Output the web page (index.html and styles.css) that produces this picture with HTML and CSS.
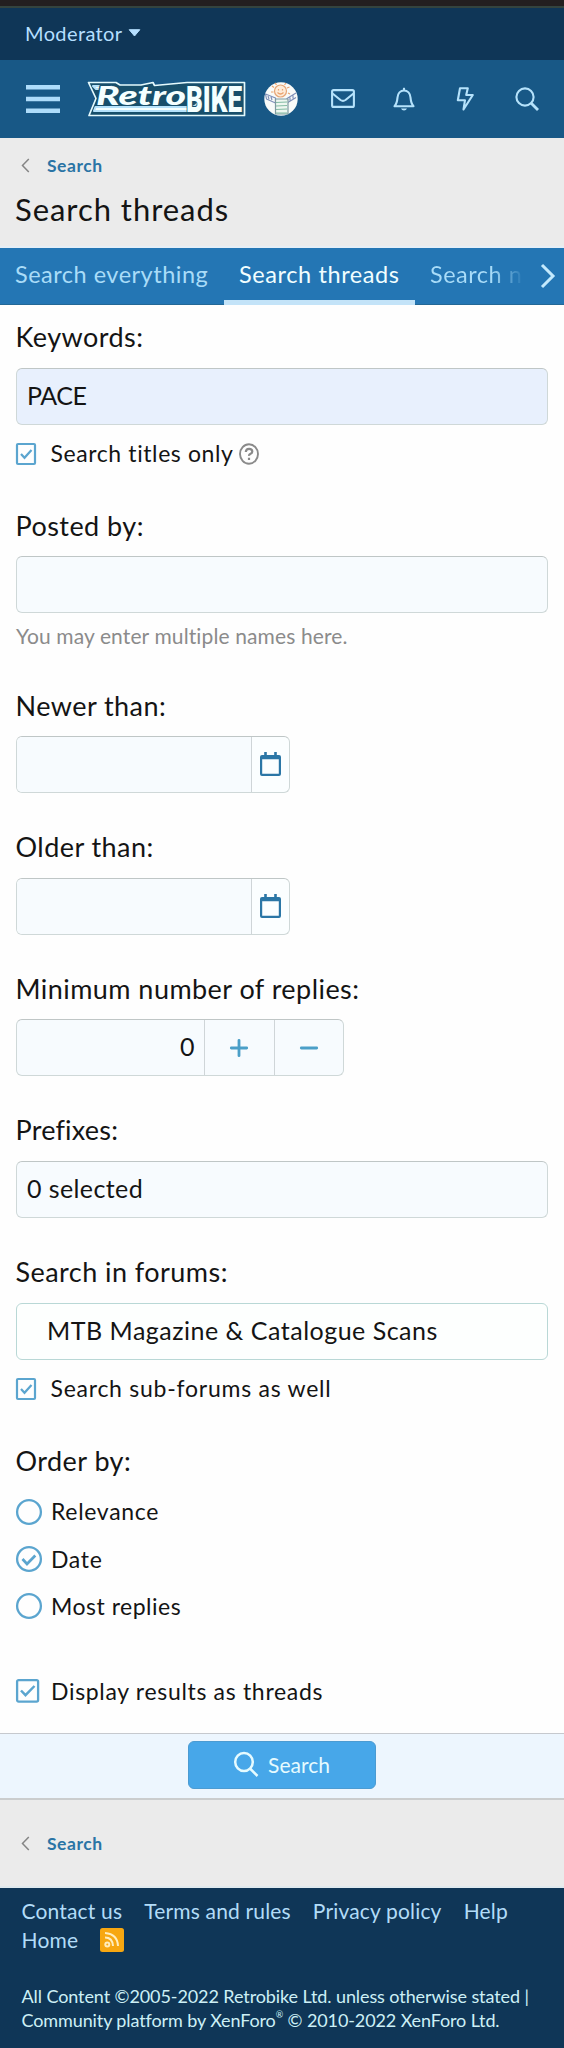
FILE: index.html
```
<!DOCTYPE html>
<html lang="en">
<head>
<meta charset="utf-8">
<title>Search threads | Retrobike</title>
<link rel="stylesheet" href="styles.css">
</head>
<body>
<div class="status-edge"></div>
<div class="staff-bar"><span>Moderator</span><svg width="13" height="8" viewBox="0 0 13 8"><path d="M1.2.7h10.6L6.5 7z" fill="#b5dfff" stroke="#b5dfff" stroke-linejoin="round"/></svg></div>
<header class="nav">
  <svg class="burger" width="34" height="30" viewBox="0 0 34 30" fill="#aedcfa"><path d="M0 1h34v4.6H0zM0 12.8h34v4.4H0zM0 24.5h34V29H0z"/></svg>
  <svg class="logo" width="158" height="36" viewBox="0 0 158 36">
    <path d="M.5 1.500H28L32 4h21l12-2.500 1.500 3L99 1.500h57.500v33H1L8 17.500z" fill="#174f6b" stroke="#e4fafd" stroke-width="1.700"/>
    <path d="M7.500 26h95q5 0 7-4v8H6z" fill="#f4ffff"/>
    <path d="M5 5h18l3 3H8z" fill="#f4ffff"/>
    <text x="8" y="23.500" class="logo-retro" textLength="90" lengthAdjust="spacingAndGlyphs">Retro</text>
    <text x="98" y="31" class="logo-bike" textLength="56" lengthAdjust="spacingAndGlyphs">BIKE</text>
  </svg>
  <svg class="avatar" width="34" height="34" viewBox="0 0 34 34">
    <circle cx="17" cy="17" r="16.700" fill="#f8fbf9"/>
    <g fill="none" stroke-width="1.200">
      <circle cx="16.500" cy="9" r="6" stroke="#e6a575" fill="#fdebd8"/>
      <path d="M13.500 10.500q3 3 6 0M14.500 7v1.500M18.500 7v1.500M8 4l2 1.500M11 .8l1.500 2M22 1l-1.500 2M25.500 5l-2.500 1M7 10h2.500M24 11l2 1" stroke="#e9a36f"/>
      <path d="M1.500 12l10 4v5L2.500 17zM32 11l-9 5.500v4.500l9-5.500M4 14l1 3M7 15l1 3M29 13.500v3M26 15.500v3" stroke="#7f90b8"/>
      <path d="M11.500 17h12.500v15H11.500z" stroke="#7f9aa0" fill="#eef7f0"/>
      <path d="M12 20.500l11-.5M12 24l11-.5M12 27.500l11-.5M12 31h11" stroke="#84bca4"/>
    </g>
  </svg>
  <svg class="mail" width="24" height="19" viewBox="0 0 24 19"><rect x="1.100" y="1.100" width="21.800" height="16.800" rx="1.500"/><path d="M1.500 4.500L9.500 11q2.500 1.800 5 0l8-6.500"/></svg>
  <svg class="bell" width="22" height="24" viewBox="0 0 22 24"><path d="M1.500 19.200H20.500C18 16.500 17.800 14 17.500 10.500C17.200 6.500 14.500 3.500 11 3.500S4.800 6.500 4.500 10.500C4.200 14 4 16.500 1.500 19.200z"/><path d="M11 .8v2.500"/><path d="M8 21.500h6q-.8 2-3 2t-3-2z" fill="#b5e2fb" stroke="none"/></svg>
  <svg class="bolt" width="18" height="24" viewBox="0 0 18 24"><path d="M4 1.200h7.800L10.200 8h6.600L7.500 22.500 9 13.200H1.800z"/></svg>
  <svg class="find" width="24" height="24" viewBox="0 0 24 24"><circle cx="10" cy="10" r="8.600"/><path d="M16 16l7 7" stroke-width="2.800"/></svg>
</header>
<section class="head">
  <a class="crumb"><svg width="9" height="15" viewBox="0 0 9 15"><path d="M7.800 1L1.500 7.500l6.300 6.500"/></svg><b>Search</b></a>
  <h1>Search threads</h1>
</section>
<nav class="tabs">
  <a class="t1">Search everything</a><a class="t2">Search threads</a><a class="t3">Search n</a>
  <svg width="16" height="26" viewBox="0 0 16 26"><path d="M2 2l11 11L2 24" fill="none" stroke="#c3e9fd" stroke-width="3"/></svg>
</nav>
<main class="form">
  <section class="field tall">
    <h2>Keywords:</h2>
    <div class="input filled">PACE</div>
    <div class="check"><svg width="20" height="22" viewBox="0 0 20 22"><rect x="1" y="1" width="18" height="20" rx="1"/><path d="M5 11l3.500 3.800L15.500 7"/></svg><span class="titles">Search titles only</span>
      <svg class="help" width="20" height="22" viewBox="0 0 20 22"><ellipse cx="10" cy="11" rx="9" ry="9.700"/><path d="M6.800 9q.2-3.200 3.300-3.200t3.200 2.700q0 1.500-1.700 2.300T10 12.900M10 14.800v2.200" stroke-width="2.200"/></svg></div>
  </section>
  <section class="field hinted">
    <h2>Posted by:</h2>
    <div class="input"></div>
    <p class="hint">You may enter multiple names here.</p>
  </section>
  <section class="field">
    <h2>Newer than:</h2>
    <div class="input date"><span></span><i><svg width="21" height="24" viewBox="0 0 21 24"><path d="M4.200 0h2.600v3h7.400V0h2.600v3H19q2 0 2 2v17q0 2-2 2H2q-2 0-2-2V5q0-2 2-2h2.200zM2.200 7.200V21.800H18.800V7.200z" fill="#2b76a6" fill-rule="evenodd"/></svg></i></div>
  </section>
  <section class="field">
    <h2>Older than:</h2>
    <div class="input date"><span></span><i><svg width="21" height="24" viewBox="0 0 21 24"><path d="M4.200 0h2.600v3h7.400V0h2.600v3H19q2 0 2 2v17q0 2-2 2H2q-2 0-2-2V5q0-2 2-2h2.200zM2.200 7.200V21.800H18.800V7.200z" fill="#2b76a6" fill-rule="evenodd"/></svg></i></div>
  </section>
  <section class="field">
    <h2>Minimum number of replies:</h2>
    <div class="input number"><span>0</span><i><svg width="18" height="18" viewBox="0 0 18 18"><path d="M1.300 9h15.400M9 1.300v15.400"/></svg></i><i><svg width="18" height="18" viewBox="0 0 18 18"><path d="M1.300 9h15.400"/></svg></i></div>
  </section>
  <section class="field">
    <h2 class="snug">Prefixes:</h2>
    <div class="input">0 selected</div>
  </section>
  <section class="field tall">
    <h2>Search in forums:</h2>
    <div class="input forum">MTB Magazine &amp; Catalogue Scans</div>
    <div class="check"><svg width="20" height="22" viewBox="0 0 20 22"><rect x="1" y="1" width="18" height="20" rx="1"/><path d="M5 11l3.500 3.800L15.500 7"/></svg><span>Search sub-forums as well</span></div>
  </section>
  <section class="order">
    <h2>Order by:</h2>
    <div class="options">
      <div class="option"><svg width="26" height="26" viewBox="0 0 26 26"><circle cx="13" cy="13" r="11.900"/></svg><span>Relevance</span></div>
      <div class="option"><svg width="26" height="26" viewBox="0 0 26 26"><circle cx="13" cy="13" r="11.900"/><path d="M6.500 13l4.500 5 8.300-8.500" stroke-width="2.700"/></svg><span>Date</span></div>
      <div class="option"><svg width="26" height="26" viewBox="0 0 26 26"><circle cx="13" cy="13" r="11.900"/></svg><span class="replies">Most replies</span></div>
    </div>
    <div class="option"><svg width="26" height="24" viewBox="0 0 26 24"><rect x="1.100" y="1.100" width="21" height="21.500" rx="1.500"/><path d="M5 11.500l4.500 4.700L18.500 7" stroke-width="2.500"/></svg><span>Display results as threads</span></div>
  </section>
</main>
<div class="submit"><button><svg width="25" height="25" viewBox="0 0 25 25"><ellipse cx="10" cy="10" rx="8.800" ry="9"/><path d="M16 16.500l7.500 7.500"/></svg><span>Search</span></button></div>
<section class="foot-crumb"><a class="crumb"><svg width="9" height="15" viewBox="0 0 9 15"><path d="M7.800 1L1.500 7.500l6.300 6.500"/></svg><b>Search</b></a></section>
<footer>
  <div class="links"><a>Contact us</a><a>Terms and rules</a><a>Privacy policy</a><a>Help</a></div>
  <div class="links"><a>Home</a><svg width="24" height="24" viewBox="0 0 24 24"><rect width="24" height="24" rx="2.500" fill="#f7a711"/><g fill="none" stroke="#ffedbd" stroke-width="2"><circle cx="7.300" cy="16.500" r="2"/><path d="M5 9.500q7.500 0 8 8.500M5 5q12.500 1 13 13"/></g></svg></div>
  <p class="copy"><span class="c1">All Content ©2005-2022 Retrobike Ltd. unless otherwise stated |</span><span class="c2">Community platform by XenForo<sup>®</sup> © 2010-2022 XenForo Ltd.</span></p>
</footer>
</body>
</html>
```
FILE: styles.css
```
* { box-sizing: border-box; }
body { margin: 0; width: 564px; height: 2048px; background: #fefefe; color: #141414; font-family: Lato, "Noto Sans", sans-serif; display: flex; flex-direction: column; overflow: hidden; }
h1, h2, p { margin: 0; font-weight: 400; }
svg { display: block; flex: none; overflow: visible; }
.status-edge { height: 8px; background: #231f20; border-bottom: 2px solid #34443f; flex: none; }
.staff-bar { height: 52px; background: #0f3657; display: flex; align-items: center; gap: 6px; padding: 0 0 3px 25px; color: #b5dfff; font-size: 20px; letter-spacing: .38px; flex: none; }
.nav { height: 77.500px; background: #185886; display: flex; align-items: center; padding-left: 26px; flex: none; fill: none; stroke: #b5e2fb; stroke-width: 2.100; stroke-linejoin: round; }
.burger { stroke: none; }
.logo { margin-left: 28px; margin-top: 1px; }
.logo text { fill: #f4ffff; font-weight: 900; stroke: #174f6b; stroke-width: 2px; paint-order: stroke; }
.logo-retro { font-family: Lato, sans-serif; font-style: italic; font-size: 26px; }
.logo-bike { font-family: Roboto, sans-serif; font-size: 37px; }
.avatar { stroke: none; margin-left: 18px; }
.mail { margin-left: 33px; }
.bell { margin-left: 38px; }
.bolt { margin-left: 41px; }
.find { margin-left: 41px; }
.head { height: 110.500px; background: #ebebeb; border-bottom: 2px solid #e5eef6; padding: 14px 16px 0; flex: none; }
.crumb { display: flex; align-items: center; height: 27px; padding-left: 5px; gap: 17px; font-size: 17.500px; letter-spacing: .55px; color: #2a74a5; fill: none; stroke: #858585; stroke-width: 1.500; }
.crumb b { font-weight: 700; }
h1 { font-size: 31px; line-height: 38px; letter-spacing: .95px; margin-top: 11px; margin-left: -1px; }
.tabs { height: 57px; background: #2476b4; display: flex; flex: none; font-size: 23.500px; line-height: 52px; letter-spacing: .5px; color: #a9dcf8; border-bottom: 1px solid #236896; }
.tabs a { height: 57px; white-space: nowrap; }
.t1 { width: 224px; padding-left: 15px; }
.t2 { width: 191px; padding-left: 15px; color: #f1feff; letter-spacing: .6px; border-bottom: 5px solid #c3e3f8; }
.t3 { width: 109px; padding-left: 15px; background: linear-gradient(90deg, #a9dcf8 70%, #2476b4 100%); -webkit-background-clip: text; background-clip: text; color: transparent; }
.tabs svg { margin: 15px 0 0 15.500px; }
.form { padding: 16px 16px 0; height: 1427.500px; flex: none; }
.field { height: 141.630px; }
.tall { height: 188.600px; }
.hinted { height: 180px; }
h2 { font-size: 27px; line-height: 32px; letter-spacing: .45px; margin-left: -.5px; margin-bottom: 14.500px; }
.snug { letter-spacing: .2px; }
.input { width: 532px; height: 57px; border: 1.500px solid #cfd8d8; border-top-color: #bfc6c6; border-radius: 6px; background: #f7fbfe; font-size: 25px; line-height: 53px; letter-spacing: .4px; padding-left: 10px; }
.filled { background: #e8f0fd; letter-spacing: -.5px; }
.forum { background: #fdfffe; border-color: #b9d8d6; padding-left: 30px; letter-spacing: .5px; }
.date, .number { display: flex; padding: 0; background: #fbfeff; }
.date { width: 273.500px; }
.number { width: 328px; background: #f7fbfe; text-align: right; }
.input i { border-left: 1.500px solid #cfd5d8; display: flex; align-items: center; justify-content: center; }
.date span { width: 234px; background: #f7fbfe; border-radius: 5px 0 0 5px; }
.date i { flex: 1; padding-bottom: 1px; }
.number span { width: 187px; padding-right: 9px; }
.number i { flex: 1; fill: none; stroke: #4b9fc8; stroke-width: 2.800; stroke-linecap: round; }
.check { display: flex; align-items: center; height: 30px; margin-top: 14px; font-size: 23px; letter-spacing: .75px; fill: none; stroke: #5ba5cf; stroke-width: 2.200; }
.check span { margin-left: 14.500px; padding-bottom: 1px; }
.check .titles { letter-spacing: .6px; }
.help { margin-left: 6px; stroke: #8a8a8a; stroke-width: 1.900; }
.hint { font-size: 21px; line-height: 26px; letter-spacing: .12px; color: #8b8b8b; margin-top: 10px; }
.order h2 { margin-bottom: 11.500px; }
.options { margin-bottom: 37.500px; }
.option { display: flex; align-items: center; height: 47.300px; gap: 9px; font-size: 23px; letter-spacing: .68px; fill: none; stroke: #5ba5cf; stroke-width: 2.300; }
.option span { padding-bottom: 1px; }
.option .replies { letter-spacing: .5px; }
.submit { height: 67px; background: #edf6fe; border-top: 1.500px solid #c6c9ce; border-bottom: 2px solid #cbcdce; display: flex; justify-content: center; align-items: flex-start; padding-top: 7.500px; flex: none; }
button { width: 188px; height: 48px; border: 1px solid #4b9bd2; border-radius: 6px; background: #47a7e9; color: #e6fbff; font: 21px Lato, sans-serif; display: flex; align-items: center; justify-content: center; gap: 9px; padding: 0 0 2px; fill: none; stroke: #e6fbff; stroke-width: 2.500; }
.foot-crumb { height: 88.500px; background: #ebebeb; border-bottom: 2px solid #e0e9ee; padding: 30.500px 16px 0; flex: none; }
footer { flex: 1; background: #0f3657; padding: 8px 0 0 21.500px; color: #b2dcf8; font-size: 21px; letter-spacing: .17px; }
.links { display: flex; align-items: center; height: 29px; gap: 22px; }
.copy { margin-top: 30px; font-size: 18px; line-height: 24.300px; color: #cdf0f6; letter-spacing: 0; white-space: nowrap; }
.copy span { display: block; }
.copy .c1 { letter-spacing: -.09px; }
.copy .c2 { letter-spacing: -.11px; }
sup { font-size: 9px; line-height: 0; vertical-align: 9px; }
```
